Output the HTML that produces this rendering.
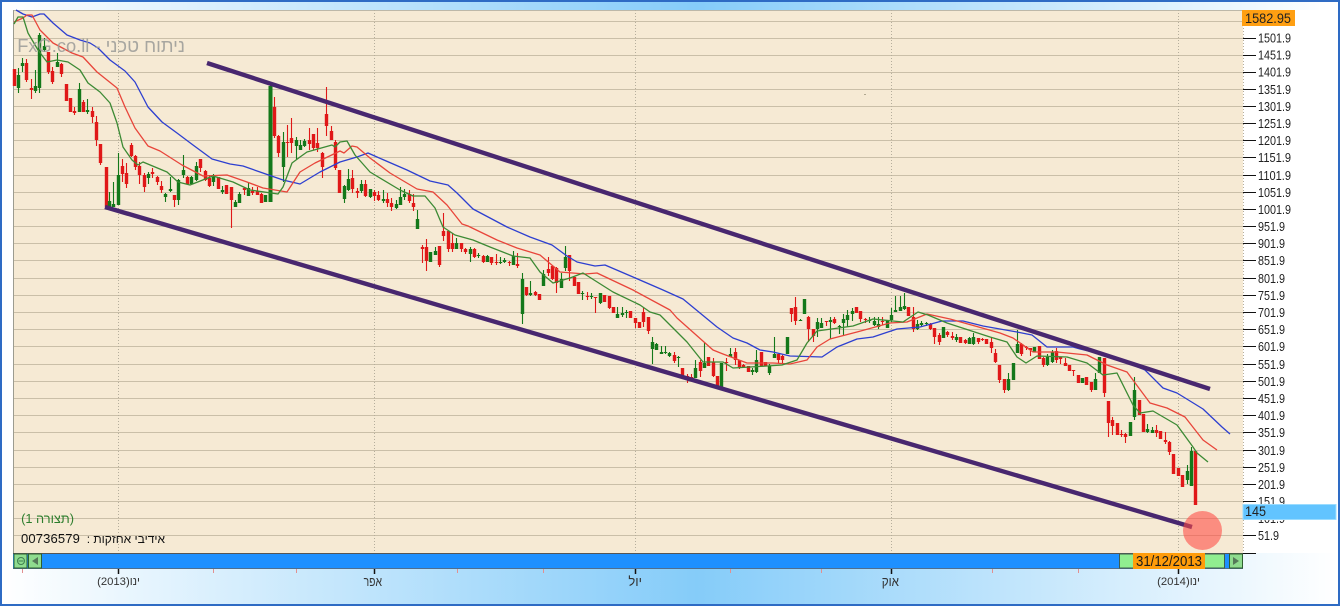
<!DOCTYPE html>
<html><head><meta charset="utf-8"><style>
html,body{margin:0;padding:0;background:#fff}
#p{position:relative;width:1340px;height:606px;overflow:hidden;box-sizing:border-box;border:2px solid #2e6bc4;background:linear-gradient(90deg,#fff 0,#85ccf9 52%,#fff 100%)}
svg{position:absolute;left:-2px;top:-2px}
text{font-family:"Liberation Sans",sans-serif}
.h{font-family:"Liberation Sans","Noto Sans CJK SC",sans-serif}
</style></head><body><div id="p">
<svg width="1340" height="606" viewBox="0 0 1340 606">
<rect x="1243" y="10" width="95" height="543" fill="#fff"/>
<rect x="2" y="10" width="12" height="560" fill="#fff"/>
<rect x="13.5" y="10.5" width="1229.5" height="543" fill="#f6ead4"/>
<path d="M14 10.5H1243" stroke="#bdb8a8" stroke-width="1"/>
<path d="M13.5 10V553" stroke="#9c9c90" stroke-width="1"/>
<path stroke="#cabfa8" stroke-width="1.1" d="M14 21.5H1243M14 38.5H1243M14 55.5H1243M14 72.5H1243M14 89.5H1243M14 106.5H1243M14 123.5H1243M14 140.5H1243M14 157.5H1243M14 175.5H1243M14 192.5H1243M14 209.5H1243M14 226.5H1243M14 243.5H1243M14 260.5H1243M14 278.5H1243M14 295.5H1243M14 312.5H1243M14 329.5H1243M14 346.5H1243M14 364.5H1243M14 381.5H1243M14 398.5H1243M14 415.5H1243M14 432.5H1243M14 450.5H1243M14 467.5H1243M14 484.5H1243M14 501.5H1243M14 518.5H1243M14 535.5H1243"/>
<path stroke="#b5ae9c" stroke-width="1" stroke-dasharray="1 2" shape-rendering="crispEdges" d="M118.5 10V553M374.5 10V553M635.5 10V553M891.5 10V553M1178.5 10V553M1243.5 10V553"/>
<rect x="864" y="94" width="2" height="1" fill="#b0a890"/>

<g transform="translate(.5 0)" fill="none">
<path stroke="#e01818" stroke-width="1.1" d="M14 69V86M26 59V82M31 79V99M48 52V74M52 67V84M61 63V77M66 84V101M70 98V112M74 107V115M83 100V112M92 107V123M96 116V146M100 144V165M106 167V207M122 159V182M126 163V188M131 143V157M135 155V170M139 162V184M144 173V192M152 168V178M157 176V185M161 181V193M174 195V207M187 176V185M200 159V172M205 170V181M209 175V187M218 177V189M226 185V194M231 187V228M244 187V195M252 187V195M257 187V195M261 193V203M274 97V138M278 135V157M287 125V157M291 118V153M309 128V150M313 134V150M317 128V152M322 152V178M326 87V136M331 126V140M335 140V170M339 170V193M352 170V193M357 188V198M365 180V197M374 190V201M378 191V201M387 193V207M391 198V211M409 190V203M413 194V211M422 245V263M426 239V271M439 246V267M443 213V241M448 231V252M452 233V252M461 243V252M465 248V254M474 248V258M483 255V263M491 257V265M496 254V265M509 261V266M517 253V268M526 287V296M535 291V296M539 294V300M548 257V276M552 265V280M556 267V293M569 255V281M574 277V286M578 282V294M587 292V300M595 297V313M604 295V302M609 296V309M613 307V313M630 311V318M635 318V328M639 322V328M643 308V327M648 317V334M674 352V363M682 368V377M687 374V383M691 374V380M700 360V377M708 357V366M713 358V377M717 376V387M726 358V371M735 348V365M739 360V369M743 364V368M748 366V372M761 352V366M765 362V366M778 354V363M782 355V363M791 308V322M795 297V325M808 316V342M813 329V342M826 321V326M834 317V324M856 307V313M860 311V322M865 318V323M882 317V325M908 307V316M913 307V332M930 323V330M934 328V344M939 333V345M947 331V337M952 332V340M960 337V343M965 339V344M978 338V344M982 338V341M986 339V344M991 338V353M995 349V363M999 365V383M1004 379V393M1021 343V356M1026 346V350M1030 348V356M1039 346V359M1043 357V367M1056 348V363M1060 357V364M1065 358V366M1069 365V371M1073 370V376M1078 375V383M1086 377V385M1091 382V392M1104 358V397M1108 401V437M1112 417V435M1117 423V435M1121 430V437M1125 433V443M1139 400V415M1143 414V432M1156 425V437M1160 431V439M1165 432V444M1169 441V455M1173 454V474M1178 468V476M1182 475V487M1195 451V505"/>
<path stroke="#e01818" stroke-width="3.4" d="M14 69V86M26 63V80M31 88V90M48 52V72M52 71V82M61 64V74M66 84V101M70 98V112M74 111V113M83 102V112M92 111V117M96 122V140M100 144V163M106 167V207M122 166V174M126 173V184M131 145V156M135 156V167M139 166V175M144 175V187M152 172V174M157 177V182M161 186V190M174 195V200M187 177V184M200 159V168M205 171V180M209 178V186M218 177V189M226 185V194M231 187V200M244 188V190M252 191V193M257 191V195M261 194V203M274 107V136M278 136V153M287 142V143M291 138V143M309 140V144M313 134V148M317 143V148M322 153V167M326 114V126M331 131V140M335 142V168M339 170V193M352 178V189M357 191V193M365 184V196M374 192V196M378 195V200M387 199V203M391 203V207M409 194V201M413 203V207M422 247V249M426 247V261M439 246V265M443 231V236M448 231V249M452 243V249M461 243V249M465 249V252M474 249V257M483 256V262M491 257V263M496 262V263M509 262V263M517 264V266M526 287V295M535 292V295M539 294V300M548 269V273M552 266V279M556 268V283M569 255V271M574 277V286M578 282V294M587 296V297M595 297V298M604 295V302M609 296V308M613 307V313M630 311V318M635 318V323M639 322V328M643 312V322M648 317V331M674 355V361M682 368V377M687 376V379M691 377V379M700 362V371M708 357V366M713 362V376M717 376V387M726 362V363M735 352V360M739 360V367M743 365V367M748 366V372M761 352V366M765 362V366M778 354V360M782 356V360M791 308V314M795 307V321M808 317V329M813 329V336M826 321V322M834 319V323M856 307V313M860 311V319M865 319V320M882 321V322M908 307V316M913 317V329M930 324V329M934 328V337M939 335V342M947 332V335M952 336V338M960 337V343M965 340V343M978 338V342M982 339V340M986 339V344M991 342V348M995 353V362M999 365V380M1004 379V390M1021 344V354M1026 347V348M1030 348V350M1039 346V359M1043 358V365M1056 351V360M1060 357V359M1065 363V366M1069 365V371M1073 370V371M1078 375V383M1086 377V385M1091 382V390M1104 358V393M1108 401V423M1112 420V426M1117 423V435M1121 434V435M1125 434V437M1139 400V415M1143 414V432M1156 430V433M1160 431V439M1165 440V442M1169 442V452M1173 454V474M1178 468V476M1182 475V487M1195 451V505"/>
<path stroke="#14781a" stroke-width="1.1" d="M18 68V93M22 58V72M35 70V93M39 33V93M44 38V52M57 53V67M79 83V112M87 99V114M109 192V207M113 182V207M118 153V205M148 172V184M165 193V202M170 177V192M178 179V205M183 155V178M191 176V185M196 162V181M213 174V186M222 186V194M235 200V207M239 192V203M248 182V196M265 195V202M270 83V86M283 132V182M296 137V160M300 140V150M304 139V147M344 185V203M348 169V191M361 180V193M370 189V198M383 190V203M396 200V209M400 187V205M404 189V200M417 210V229M430 252V262M435 247V255M456 238V249M470 247V262M478 253V258M487 255V262M500 257V264M504 258V263M513 251V265M522 273V324M530 281V296M543 270V286M561 273V288M565 246V271M582 291V300M591 293V299M600 293V304M617 307V318M622 307V317M626 310V318M652 337V364M656 343V350M661 346V354M665 346V354M669 352V357M678 356V367M695 360V378M704 342V368M721 363V387M730 348V357M752 368V375M756 350V373M769 364V375M774 337V358M787 337V354M800 319V321M804 299V314M817 318V337M821 318V328M830 317V339M839 325V334M843 314V335M847 310V327M852 308V321M869 317V323M874 317V326M878 317V329M887 320V328M891 308V322M895 296V312M900 296V311M904 293V310M917 320V330M921 321V326M926 322V326M943 327V338M956 334V342M969 337V344M973 333V345M1008 373V391M1013 363V380M1017 330V353M1034 347V352M1047 354V366M1052 350V363M1082 378V383M1095 373V390M1099 357V373M1130 422V436M1134 377V420M1147 424V433M1152 427V433M1187 465V484M1191 447V486"/>
<path stroke="#14781a" stroke-width="3.4" d="M18 75V88M22 63V66M35 86V91M39 35V88M44 46V50M57 62V67M79 89V112M87 110V112M109 201V207M113 204V207M118 175V205M148 174V178M165 194V197M170 189V191M178 180V200M183 170V175M191 177V184M196 166V180M213 177V182M222 190V192M235 202V207M239 194V203M248 188V196M265 195V202M283 142V167M296 140V146M300 145V150M304 141V146M344 186V199M348 179V190M361 184V191M370 189V197M383 199V201M396 204V208M400 197V205M404 194V197M417 219V229M430 252V262M435 251V255M456 243V249M470 249V254M478 255V256M487 256V262M500 262V263M504 260V262M513 256V265M522 279V314M530 293V295M543 274V286M561 279V288M565 257V268M582 293V294M591 296V297M600 293V303M617 314V318M622 313V315M626 312V313M652 342V349M656 344V350M661 352V354M665 352V353M669 353V356M678 357V358M695 368V378M704 363V368M721 363V387M730 354V357M752 370V372M756 360V372M769 366V373M774 354V358M787 337V354M800 320V321M804 299V314M817 322V329M821 323V328M830 320V322M839 326V327M843 319V323M847 315V320M852 311V314M869 320V321M874 321V325M878 324V327M887 320V328M891 315V320M895 310V312M900 307V311M904 306V309M917 324V329M921 323V325M926 323V324M943 327V338M956 337V340M969 338V344M973 337V344M1008 379V390M1013 363V380M1017 344V353M1034 347V352M1047 357V365M1052 352V362M1082 378V383M1095 379V390M1099 357V373M1130 422V436M1134 390V417M1147 429V432M1152 430V433M1187 471V480M1191 451V486"/>
<path stroke="#14781a" stroke-width="4" d="M270 86V202"/>
</g>

<g fill="none" stroke-width="1.3" stroke-linejoin="round">
<polyline stroke="#2d3fd0" points="16,10 23,14 32,17 40,14 44,14 53,23 67,35 80,40 90,43 98,48 110,60 125,71 135,82 148,107 162,122 177,133 193,145 212,159 230,164 243,166 260,172 283,180 300,184 320,172 340,162 357,157 368,153 377,157 407,170 430,181 448,185 457,193 473,209 507,227 530,237 552,245 567,256 577,262 595,266 605,265 633,277 663,290 683,299 700,313 717,327 733,338 747,343 760,350 773,352 790,356 822,357 837,347 857,339 873,337 897,329 920,327 942,321 963,321 983,326 1017,332 1032,335 1047,347 1073,347 1080,349 1110,356 1145,370 1163,388 1177,393 1203,409 1222,427 1230,434"/>
<polyline stroke="#e8453a" points="14,22 23,18 27,15 32,15 40,30 53,43 72,53 83,57 97,72 117,88 125,107 135,128 148,146 160,151 182,165 203,176 227,175 247,182 263,188 287,192 300,172 315,163 340,151 344,153 352,146 357,147 370,158 390,173 417,189 433,192 447,205 462,224 468,226 497,240 517,248 540,255 560,272 585,274 597,273 633,290 670,310 677,318 713,350 723,354 747,363 773,363 790,364 807,360 817,347 830,339 857,332 890,323 907,322 927,314 950,319 1000,333 1013,338 1033,352 1057,352 1087,355 1107,365 1127,372 1150,403 1167,408 1185,417 1203,440 1217,450"/>
<polyline stroke="#3c8a34" points="14,24 18,17 23,17 28,33 38,50 47,62 57,60 68,62 80,70 88,83 100,92 110,103 117,123 123,147 132,160 138,165 143,162 167,172 178,182 190,185 213,176 233,182 250,190 278,194 283,187 292,163 300,157 307,152 332,145 335,147 340,142 347,141 355,155 370,172 400,190 413,196 425,196 435,208 443,227 455,235 473,240 490,247 513,256 530,258 540,272 553,283 570,278 583,273 613,292 640,305 650,312 660,315 667,322 687,342 703,362 723,362 733,368 767,366 782,365 797,360 807,343 817,331 853,326 873,319 903,322 918,312 928,315 947,323 990,337 1007,342 1017,357 1026,363 1037,356 1067,357 1087,363 1103,375 1117,373 1133,405 1140,413 1153,411 1177,425 1193,447 1197,453 1208,462"/>
</g>

<text class="h" x="185" y="52" direction="rtl" style="direction:rtl" font-size="18.3" fill="#9c9c98" fill-opacity=".88">ניתוח טכני - FxG.co.il</text>

<g stroke="#48276f" stroke-width="4.4" stroke-linecap="butt">
<line x1="207" y1="63" x2="1210" y2="389"/>
<line x1="105" y1="207" x2="1192" y2="527"/>
</g>
<circle cx="1202.5" cy="530.5" r="19.5" fill="#ff4a44" fill-opacity=".58"/>

<text class="h" x="74" y="523" direction="rtl" style="direction:rtl" font-size="12.8" fill="#2c7d2c">(תצורה 1)</text>
<text class="h" x="165" y="543" direction="rtl" style="direction:rtl" font-size="12" fill="#111">אידיבי אחזקות :</text>
<text x="21" y="543" font-size="13" letter-spacing=".15" fill="#111">00736579</text>

<rect x="13" y="553" width="1230" height="1" fill="#555"/>
<rect x="13" y="554" width="1230" height="14" fill="#1e90ff"/>
<rect x="13" y="568" width="1230" height="1" fill="#4f6f8f"/>
<rect x="14" y="554" width="13" height="14" fill="#8fdc8f" stroke="#2f5f2f" stroke-width="1"/>
<circle cx="21" cy="561" r="3.5" fill="none" stroke="#3f7f4f" stroke-width="1"/><path d="M18.5 561h5" stroke="#3f7f4f"/>
<rect x="28.5" y="554" width="13" height="14" fill="#8fdc8f" stroke="#2f5f2f" stroke-width="1"/>
<path d="M32 561l6-4v8z" fill="#557a5a"/>
<rect x="1119.5" y="554" width="105" height="14" fill="#90ee90" stroke="#3f5f4f" stroke-width="1"/>
<rect x="1229.5" y="554" width="13" height="14" fill="#8fdc8f" stroke="#2f5f2f" stroke-width="1"/>
<path d="M1239 561l-6-4v8z" fill="#557a5a"/>
<rect x="1133" y="553" width="72" height="16" fill="#ff9c0a"/>
<text x="1136" y="566" font-size="14.5" fill="#1a1a1a" textLength="66" lengthAdjust="spacingAndGlyphs">31/12/2013</text>

<path stroke="#e29090" stroke-width="1" shape-rendering="crispEdges" d="M22.5 569v4M213.5 569v4M296.5 569v4M457.5 569v4M543.5 569v4M730.5 569v4M821.5 569v4M992.5 569v4M1078.5 569v4"/>
<path stroke="#111" stroke-width="1.5" d="M118.5 569v5M374.5 569v5M635.5 569v5M891.5 569v5M1178.5 569v5"/>
<g font-size="11.3" fill="#333">
<text class="h" x="140" y="585" direction="rtl" style="direction:rtl">ינו(2013)</text>
<text class="h" transform="translate(382 586) scale(.8 1)" x="0" y="0" direction="rtl" font-size="13" style="direction:rtl">אפר</text>
<text class="h" x="642" y="586" direction="rtl" font-size="13" style="direction:rtl">יול</text>
<text class="h" transform="translate(899 586) scale(.9 1)" x="0" y="0" direction="rtl" font-size="13" style="direction:rtl">אוק</text>
<text class="h" x="1200" y="585" direction="rtl" style="direction:rtl">ינו(2014)</text>
</g>

<rect x="1242" y="10" width="53" height="16" fill="#ff9f12"/>
<text x="1245" y="23" font-size="13.5" fill="#222" textLength="46" lengthAdjust="spacingAndGlyphs">1582.95</text>
<path stroke="#111" stroke-width="1" shape-rendering="crispEdges" d="M1243 38.5h13M1243 55.5h13M1243 72.5h13M1243 89.5h13M1243 106.5h13M1243 123.5h13M1243 140.5h13M1243 157.5h13M1243 175.5h13M1243 192.5h13M1243 209.5h13M1243 226.5h13M1243 243.5h13M1243 260.5h13M1243 278.5h13M1243 295.5h13M1243 312.5h13M1243 329.5h13M1243 346.5h13M1243 364.5h13M1243 381.5h13M1243 398.5h13M1243 415.5h13M1243 432.5h13M1243 450.5h13M1243 467.5h13M1243 484.5h13M1243 501.5h13M1243 518.5h13M1243 535.5h13M1243 553.5h13"/>
<g font-size="12.5" fill="#222">
<text x="1258" y="42.5" textLength="33" lengthAdjust="spacingAndGlyphs">1501.9</text>
<text x="1258" y="59.5" textLength="33" lengthAdjust="spacingAndGlyphs">1451.9</text>
<text x="1258" y="76.5" textLength="33" lengthAdjust="spacingAndGlyphs">1401.9</text>
<text x="1258" y="94" textLength="33" lengthAdjust="spacingAndGlyphs">1351.9</text>
<text x="1258" y="111" textLength="33" lengthAdjust="spacingAndGlyphs">1301.9</text>
<text x="1258" y="128" textLength="33" lengthAdjust="spacingAndGlyphs">1251.9</text>
<text x="1258" y="145" textLength="33" lengthAdjust="spacingAndGlyphs">1201.9</text>
<text x="1258" y="162" textLength="33" lengthAdjust="spacingAndGlyphs">1151.9</text>
<text x="1258" y="180" textLength="33" lengthAdjust="spacingAndGlyphs">1101.9</text>
<text x="1258" y="197" textLength="33" lengthAdjust="spacingAndGlyphs">1051.9</text>
<text x="1258" y="214" textLength="33" lengthAdjust="spacingAndGlyphs">1001.9</text>
<text x="1258" y="231" textLength="27" lengthAdjust="spacingAndGlyphs">951.9</text>
<text x="1258" y="248" textLength="27" lengthAdjust="spacingAndGlyphs">901.9</text>
<text x="1258" y="265" textLength="27" lengthAdjust="spacingAndGlyphs">851.9</text>
<text x="1258" y="283" textLength="27" lengthAdjust="spacingAndGlyphs">801.9</text>
<text x="1258" y="300" textLength="27" lengthAdjust="spacingAndGlyphs">751.9</text>
<text x="1258" y="317" textLength="27" lengthAdjust="spacingAndGlyphs">701.9</text>
<text x="1258" y="334" textLength="27" lengthAdjust="spacingAndGlyphs">651.9</text>
<text x="1258" y="351" textLength="27" lengthAdjust="spacingAndGlyphs">601.9</text>
<text x="1258" y="369" textLength="27" lengthAdjust="spacingAndGlyphs">551.9</text>
<text x="1258" y="386" textLength="27" lengthAdjust="spacingAndGlyphs">501.9</text>
<text x="1258" y="403" textLength="27" lengthAdjust="spacingAndGlyphs">451.9</text>
<text x="1258" y="420" textLength="27" lengthAdjust="spacingAndGlyphs">401.9</text>
<text x="1258" y="437" textLength="27" lengthAdjust="spacingAndGlyphs">351.9</text>
<text x="1258" y="455" textLength="27" lengthAdjust="spacingAndGlyphs">301.9</text>
<text x="1258" y="472" textLength="27" lengthAdjust="spacingAndGlyphs">251.9</text>
<text x="1258" y="489" textLength="27" lengthAdjust="spacingAndGlyphs">201.9</text>
<text x="1258" y="506" textLength="27" lengthAdjust="spacingAndGlyphs">151.9</text>
<text x="1258" y="523" textLength="27" lengthAdjust="spacingAndGlyphs">101.9</text>
<text x="1258" y="540" textLength="21" lengthAdjust="spacingAndGlyphs">51.9</text>
</g>
<rect x="1243" y="504.5" width="93" height="15" fill="#62c4ff" stroke="#9adcff" stroke-width="1"/>
<text x="1245" y="516" font-size="13.5" fill="#222" textLength="21" lengthAdjust="spacingAndGlyphs">145</text>
</svg>
</div></body></html>
